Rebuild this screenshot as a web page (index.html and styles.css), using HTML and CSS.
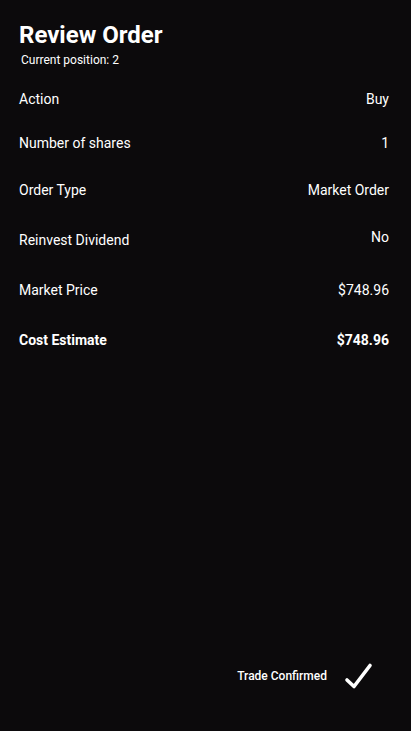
FILE: index.html
```html
<!DOCTYPE html>
<html>
<head>
<meta charset="utf-8">
<link rel="stylesheet" href="styles.css">
</head>
<body>
<div class="screen">
  <header class="header">
    <h1 class="title">Review Order</h1>
    <p class="subtitle">Current position: 2</p>
  </header>
  <div class="rows">
    <div class="row r1"><span class="label">Action</span><span class="value">Buy</span></div>
    <div class="row r2"><span class="label">Number of shares</span><span class="value">1</span></div>
    <div class="row r3"><span class="label">Order Type</span><span class="value">Market Order</span></div>
    <div class="row r4 offset"><span class="label">Reinvest Dividend</span><span class="value">No</span></div>
    <div class="row r5"><span class="label">Market Price</span><span class="value">$748.96</span></div>
    <div class="row r6 total"><span class="label">Cost Estimate</span><span class="value">$748.96</span></div>
  </div>
  <footer class="footer">
    <span class="confirm">Trade Confirmed</span>
    <svg class="check" width="30" height="30" viewBox="0 0 30 30"><path d="M4 19 L11 25.5 L27 4.5" fill="none" stroke="#fff" stroke-width="3.6" stroke-linecap="round" stroke-linejoin="round"/></svg>
  </footer>
</div>
</body>
</html>
```
FILE: styles.css
```css
html, body {
  margin: 0;
  padding: 0;
  background: #0c0a0c;
}
body {
  font-family: Roboto, "Noto Sans", sans-serif;
  color: #fff;
}
.screen {
  width: 411px;
  height: 731px;
  display: flex;
  flex-direction: column;
  box-sizing: border-box;
}
.header {
  padding: 21px 22px 0 19px;
}
.title {
  margin: 0;
  font-size: 24px;
  line-height: 28px;
  font-weight: 700;
}
.subtitle {
  margin: 4px 0 0 2px;
  font-size: 12px;
  line-height: 14px;
}
.rows {
  display: flex;
  flex-direction: column;
  padding: 0 22px 0 19px;
}
.row {
  display: flex;
  justify-content: space-between;
  align-items: center;
  font-size: 14px;
  line-height: 20px;
  height: 20px;
}
.r1 { margin-top: 22px; }
.r2 { margin-top: 24px; }
.r3 { margin-top: 27px; }
.r4 { margin-top: 27px; }
.r5 { margin-top: 30px; }
.r6 { margin-top: 30px; }
.offset {
  height: 23px;
  align-items: flex-start;
}
.offset .label { padding-top: 3px; }
.total {
  font-weight: 700;
}
.footer {
  margin-top: auto;
  display: flex;
  justify-content: flex-end;
  align-items: center;
  gap: 16px;
  padding: 0 38px 40px 0;
}
.confirm {
  font-size: 12px;
  font-weight: 500;
  line-height: 14px;
}
.check {
  display: block;
}
```
